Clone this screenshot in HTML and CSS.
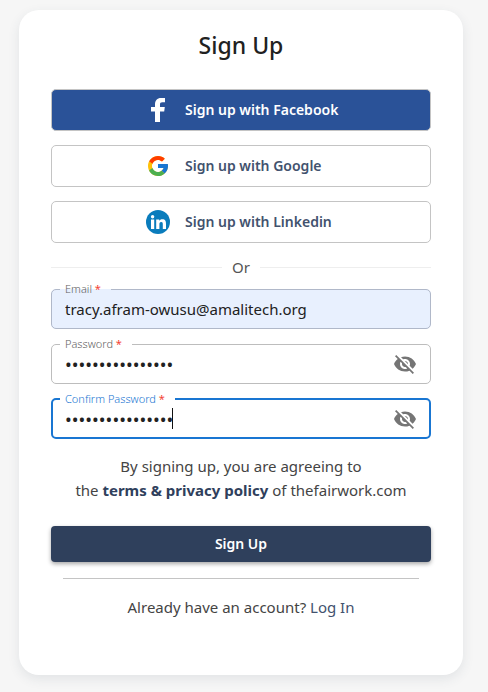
FILE: index.html
```html
<!DOCTYPE html>
<html lang="en">
<head>
<meta charset="utf-8">
<meta name="viewport" content="width=device-width, initial-scale=1">
<title>Sign Up</title>
<link rel="stylesheet" href="styles.css">
</head>
<body>
<main class="card">
  <h1 class="title">Sign Up</h1>
  <div class="providers">
    <button type="button" class="provider provider-facebook">
      <svg class="provider-icon" viewBox="0 0 24 24" aria-hidden="true"><path fill="#fff" d="M9 24V13.500H5V9h4V6.500C9 2.500 11.200 0 15 0h4v4.200h-2.600C14.400 4.200 14 5 14 6.300V9h4.800l-.6 4.500H14V24z"/></svg>
      <span>Sign up with Facebook</span>
    </button>
    <button type="button" class="provider">
      <svg class="provider-icon" viewBox="0 0 48 48" aria-hidden="true"><path fill="#FFC107" d="M43.611 20.083H42V20H24v8h11.303c-1.649 4.657-6.080 8-11.303 8-6.627 0-12-5.373-12-12s5.373-12 12-12c3.059 0 5.842 1.154 7.961 3.039l5.657-5.657C34.046 6.053 29.268 4 24 4 12.955 4 4 12.955 4 24s8.955 20 20 20 20-8.955 20-20c0-1.341-.138-2.650-.389-3.917z"/><path fill="#FF3D00" d="M6.306 14.691l6.571 4.819C14.655 15.108 18.961 12 24 12c3.059 0 5.842 1.154 7.961 3.039l5.657-5.657C34.046 6.053 29.268 4 24 4 16.318 4 9.656 8.337 6.306 14.691z"/><path fill="#4CAF50" d="M24 44c5.166 0 9.860-1.977 13.409-5.192l-6.190-5.238C29.211 35.091 26.715 36 24 36c-5.202 0-9.619-3.317-11.283-7.946l-6.522 5.025C9.505 39.556 16.227 44 24 44z"/><path fill="#1976D2" d="M43.611 20.083H42V20H24v8h11.303c-.792 2.237-2.231 4.166-4.087 5.571l6.193 5.238C36.971 39.205 44 34 44 24c0-1.341-.138-2.650-.389-3.917z"/></svg>
      <span>Sign up with Google</span>
    </button>
    <button type="button" class="provider">
      <svg class="provider-icon" viewBox="0 0 24 24" aria-hidden="true"><circle cx="12" cy="12" r="12" fill="#0a7cbc"/><circle cx="6.600" cy="6.800" r="1.700" fill="#fff"/><path fill="#fff" d="M5 9.500h3.200V19H5zM10.200 9.500h3v1.300c.5-.9 1.600-1.600 3.100-1.600 3.100 0 3.700 2 3.700 4.700V19h-3.200v-4.600c0-1.100 0-2.500-1.600-2.500s-1.800 1.200-1.800 2.400V19h-3.200z"/></svg>
      <span>Sign up with Linkedin</span>
    </button>
  </div>
  <div class="divider"><span>Or</span></div>
  <form class="form">
    <fieldset class="field field-filled">
      <legend class="legend"><label for="email">Email <span class="required">*</span></label></legend>
      <input class="input" id="email" type="email" value="tracy.afram-owusu@amalitech.org" required>
    </fieldset>
    <fieldset class="field">
      <legend class="legend"><label for="password">Password <span class="required">*</span></label></legend>
      <div class="row">
        <input class="input input-secret" id="password" type="password" value="fairworkfairwork" required>
        <button type="button" class="toggle" aria-label="Show password"><svg viewBox="0 0 24 24" aria-hidden="true"><path d="M12 7c2.760 0 5 2.240 5 5 0 .650-.130 1.260-.360 1.830l2.920 2.920c1.510-1.260 2.700-2.890 3.430-4.750-1.730-4.390-6-7.500-11-7.500-1.400 0-2.740.250-3.980.700l2.160 2.160C10.740 7.130 11.350 7 12 7zM2 4.270l2.280 2.280.460.460C3.080 8.300 1.780 10.020 1 12c1.730 4.390 6 7.500 11 7.500 1.550 0 3.030-.300 4.380-.840l.420.420L19.730 22 21 20.730 3.270 3 2 4.270zM7.530 9.800l1.550 1.550c-.050.210-.080.430-.080.650 0 1.660 1.340 3 3 3 .220 0 .440-.030.650-.080l1.550 1.550c-.670.330-1.410.530-2.200.530-2.760 0-5-2.240-5-5 0-.790.200-1.530.530-2.200zm4.310-.780l3.150 3.150.020-.160c0-1.660-1.340-3-3-3l-.170.010z"/></svg></button>
      </div>
    </fieldset>
    <fieldset class="field field-focused">
      <legend class="legend"><label for="confirm">Confirm Password <span class="required">*</span></label></legend>
      <div class="row">
        <input class="input input-secret" id="confirm" type="password" value="fairworkfairwork" required>
        <span class="caret"></span>
        <button type="button" class="toggle" aria-label="Show password"><svg viewBox="0 0 24 24" aria-hidden="true"><path d="M12 7c2.760 0 5 2.240 5 5 0 .650-.130 1.260-.360 1.830l2.920 2.920c1.510-1.260 2.700-2.890 3.430-4.750-1.730-4.390-6-7.500-11-7.500-1.400 0-2.740.250-3.980.700l2.160 2.160C10.740 7.130 11.350 7 12 7zM2 4.270l2.280 2.280.460.460C3.080 8.300 1.780 10.020 1 12c1.730 4.390 6 7.500 11 7.500 1.550 0 3.030-.300 4.380-.840l.420.420L19.730 22 21 20.730 3.270 3 2 4.270zM7.530 9.800l1.550 1.550c-.050.210-.080.430-.080.650 0 1.660 1.340 3 3 3 .220 0 .440-.030.650-.080l1.550 1.550c-.670.330-1.410.530-2.200.530-2.760 0-5-2.240-5-5 0-.790.200-1.530.530-2.200zm4.310-.780l3.150 3.150.020-.160c0-1.660-1.340-3-3-3l-.170.010z"/></svg></button>
      </div>
    </fieldset>
    <p class="terms">By signing up, you are agreeing to<br>the <a class="terms-link" href="#terms">terms &amp; privacy policy</a> of thefairwork.com</p>
    <button type="submit" class="submit">Sign Up</button>
  </form>
  <hr class="rule">
  <p class="login">Already have an account? <a class="login-link" href="#login">Log In</a></p>
</main>
</body>
</html>
```
FILE: styles.css
```css
* {
  box-sizing: border-box;
}

body {
  margin: 0;
  padding: 10px 25px 17px 19px;
  background: #f6f6f6;
  color: #444;
  font-family: "Noto Sans", "Open Sans", sans-serif;
  font-size: 15px;
  line-height: 24px;
}

a {
  text-decoration: none;
}

button,
input {
  font: inherit;
}

.card {
  padding: 19px 32px 56px;
  border-radius: 20px;
  background: #fff;
  box-shadow: 0 4px 12px rgba(47, 64, 92, 0.1);
}

.title {
  margin: 0 0 28px;
  color: #212121;
  font-size: 23px;
  font-weight: 500;
  line-height: 32px;
  text-align: center;
}

.providers {
  display: grid;
  gap: 14px;
}

.provider {
  display: flex;
  align-items: center;
  gap: 15px;
  height: 42px;
  padding: 0 0 0 94px;
  border: 1px solid #c4c4c4;
  border-radius: 5px;
  background: #fff;
  color: #42526e;
  font-size: 14px;
  font-weight: 600;
}

.provider-facebook {
  background: #2a5298;
  color: #fff;
}

.provider-icon {
  width: 24px;
  height: 24px;
}

.divider {
  display: flex;
  align-items: center;
  gap: 10px;
  margin: 12px 0 4px;
  color: #555;
}

.divider::before,
.divider::after {
  content: "";
  flex: 1;
  height: 1px;
  background: #eee;
}

.form {
  display: grid;
}

.field {
  min-width: 0;
  height: 46px;
  margin: 0 0 9px;
  padding: 0 8px;
  border: 1px solid #bdbdbd;
  border-radius: 5px;
}

.field-filled {
  border-color: #b0b8c9;
  background: #e8f0fe;
}

.field-focused {
  border: 2px solid #1976d2;
  padding: 0 7px;
}

.legend {
  padding: 0 10px 0 5px;
  color: #616161;
  font-size: 11px;
  font-weight: 300;
  line-height: 12px;
}

.legend label {
  display: block;
}

.field-focused .legend {
  color: #1976d2;
}

.required {
  color: #f44336;
  font-weight: 400;
}

.row {
  position: relative;
  display: flex;
  align-items: center;
}

.input {
  display: block;
  width: 100%;
  height: 40px;
  margin: -6px 0 0;
  padding: 0 5px;
  border: 0;
  outline: 0;
  background: transparent;
  color: #212121;
}

.input-secret {
  font-size: 18px;
}

.toggle {
  display: flex;
  margin: -6px 5px 0 0;
  padding: 0;
  border: 0;
  background: none;
}

.toggle svg {
  width: 24px;
  height: 24px;
  fill: #757575;
}

.caret {
  position: absolute;
  top: 3px;
  left: 112px;
  width: 1px;
  height: 21px;
  background: #111;
}

.terms {
  margin: 6px 0 24px;
  text-align: center;
}

.terms-link {
  color: #2f405c;
  font-weight: 700;
}

.submit {
  height: 36px;
  border: 0;
  border-radius: 4px;
  background: #2f405c;
  box-shadow: 0 2px 4px rgba(0, 0, 0, 0.35);
  color: #fff;
  font-size: 14px;
  font-weight: 600;
}

.rule {
  height: 1px;
  margin: 16px 12px;
  border: 0;
  background: #c4c4c4;
}

.login {
  margin: 0;
  text-align: center;
}

.login-link {
  color: #42526e;
}
```
